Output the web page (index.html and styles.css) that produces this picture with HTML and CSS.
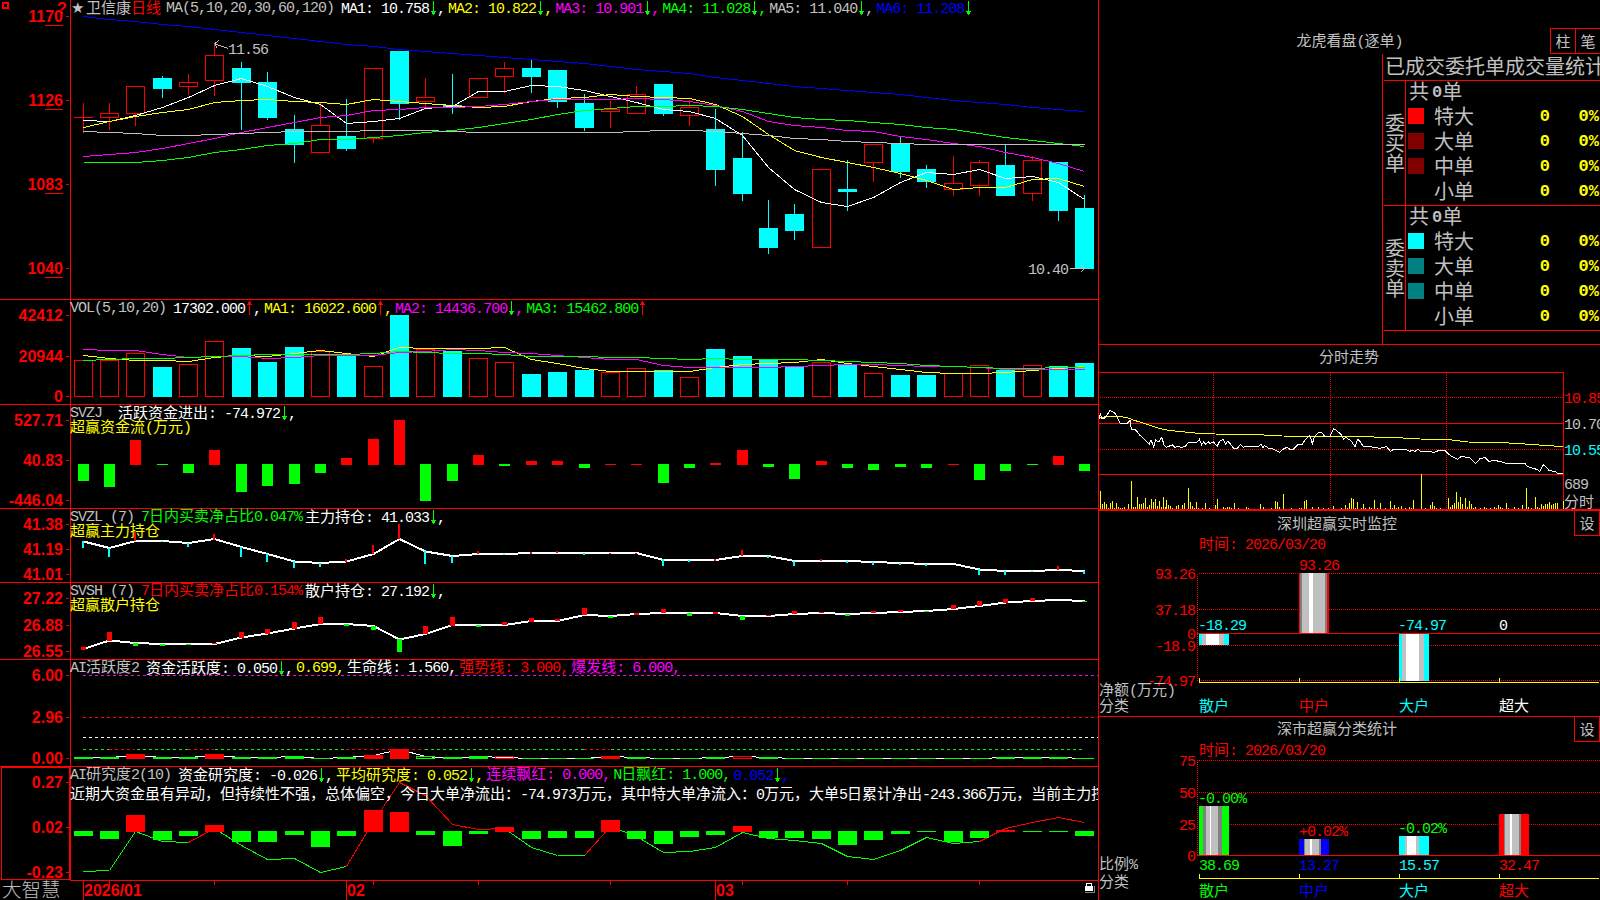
FILE: index.html
```html
<!DOCTYPE html>
<html lang="zh-CN">
<head>
    <meta charset="UTF-8">
    <meta name="viewport" content="width=device-width, initial-scale=1.0">
    <title>大智慧 - 卫信康 日线</title>
    <link rel="stylesheet" href="styles.css">
</head>
<body>
    <!-- arrow shapes reused by the indicator headers -->
    <svg class="defs" width="0" height="0">
        <symbol id="down" viewBox="0 0 8 14"><path d="M4 0h1v14h-1zM2 10h5v1h-5zM3 11h3v2h-3z"/></symbol>
        <symbol id="up" viewBox="0 0 8 14"><path d="M4 0h1v14h-1zM2 3h5v1h-5zM3 1h3v2h-3z"/></symbol>
    </svg>

    <div class="app">
        <div class="charts">
            <section class="panel">
                <svg id="kline" class="plot" viewBox="0 0 1098 299"></svg>
                <header class="head head-main">
                    <span class="star">★</span><span class="zh gray">卫信康</span><span class="zh red">日线</span>
                    <span class="gray params">MA(5,10,20,30,60,120)</span>
                    <span class="white">MA1: 10.758<svg class="arr dn"><use href="#down"/></svg>,</span>
                    <span class="yellow">MA2: 10.822<svg class="arr dn"><use href="#down"/></svg>,</span>
                    <span class="magenta">MA3: 10.901<svg class="arr dn"><use href="#down"/></svg>,</span>
                    <span class="green">MA4: 11.028<svg class="arr dn"><use href="#down"/></svg>,</span>
                    <span class="gray">MA5: 11.040<svg class="arr dn"><use href="#down"/></svg>,</span>
                    <span class="blue">MA6: 11.208<svg class="arr dn"><use href="#down"/></svg></span>
                </header>
            </section>

            <section class="panel">
                <svg id="vol" class="plot" viewBox="0 300 1098 104"></svg>
                <header class="head">
                    <span class="name">VOL(5,10,20)</span>
                    <span class="white">17302.000<svg class="arr up"><use href="#up"/></svg>,</span>
                    <span class="yellow">MA1: 16022.600<svg class="arr up"><use href="#up"/></svg>,</span>
                    <span class="magenta">MA2: 14436.700<svg class="arr dn"><use href="#down"/></svg>,</span>
                    <span class="green">MA3: 15462.800<svg class="arr up"><use href="#up"/></svg></span>
                </header>
            </section>

            <section class="panel">
                <svg id="flow" class="plot" viewBox="0 405 1098 103"></svg>
                <header class="head">
                    <span class="name wide">SVZJ</span>
                    <span class="white"><span class="zh">活跃资金进出</span>: -74.972<svg class="arr dn"><use href="#down"/></svg>,</span>
                    <p class="yellow"><span class="zh">超赢资金流</span>(<span class="zh">万元</span>)</p>
                </header>
            </section>

            <section class="panel">
                <svg id="major" class="plot" viewBox="0 509 1098 73"></svg>
                <header class="head">
                    <span class="name">SVZL (7)</span>
                    <span class="green">7<span class="zh">日内买卖净占比</span>0.047%</span>
                    <span class="white"><span class="zh">主力持仓</span>: 41.033<svg class="arr dn"><use href="#down"/></svg>,</span>
                    <p class="yellow"><span class="zh">超赢主力持仓</span></p>
                </header>
            </section>

            <section class="panel">
                <svg id="retail" class="plot" viewBox="0 583 1098 76"></svg>
                <header class="head">
                    <span class="name">SVSH (7)</span>
                    <span class="red">7<span class="zh">日内买卖净占比</span>0.154%</span>
                    <span class="white"><span class="zh">散户持仓</span>: 27.192<svg class="arr dn"><use href="#down"/></svg>,</span>
                    <p class="yellow"><span class="zh">超赢散户持仓</span></p>
                </header>
            </section>

            <section class="panel">
                <svg id="active" class="plot" viewBox="0 660 1098 106"></svg>
                <header class="head">
                    <span class="name">AI<span class="zh">活跃度</span>2</span>
                    <span class="white"><span class="zh">资金活跃度</span>: 0.050<svg class="arr dn"><use href="#down"/></svg>,</span>
                    <span class="yellow">0.699,</span>
                    <span class="white"><span class="zh">生命线</span>: 1.560,</span>
                    <span class="red"><span class="zh">强势线</span>: 3.000,</span>
                    <span class="magenta"><span class="zh">爆发线</span>: 6.000,</span>
                </header>
            </section>

            <section class="panel last">
                <svg id="study" class="plot" viewBox="0 767 1098 114"></svg>
                <header class="head">
                    <span class="name">AI<span class="zh">研究度</span>2(10)</span>
                    <span class="white"><span class="zh">资金研究度</span>: -0.026<svg class="arr dn"><use href="#down"/></svg>,</span>
                    <span class="yellow"><span class="zh">平均研究度</span>: 0.052<svg class="arr dn"><use href="#down"/></svg>,</span>
                    <span class="magenta"><span class="zh">连续飘红</span>: 0.000,</span>
                    <span class="green">N<span class="zh">日飘红</span>: 1.000,</span>
                    <span class="blue">0.052<svg class="arr dn"><use href="#down"/></svg>,</span>
                    <p class="white advice"><span class="zh">近期大资金虽有异动，但持续性不强，总体偏空，今日大单净流出：</span>-74.973<span class="zh">万元，其中特大单净流入：</span>0<span class="zh">万元，大单</span>5<span class="zh">日累计净出</span>-243.366<span class="zh">万元，当前主力控</span></p>
                </header>
            </section>

            <footer class="timeline">
                <span class="brand">大智慧</span>
                <svg id="dates" class="plot" viewBox="71 881 1027 19"></svg>
            </footer>
        </div>

        <aside class="side">
            <section class="orders">
                <div class="orders-bar">
                    <h2 class="title"><span class="zh">龙虎看盘</span>(<span class="zh">逐单</span>)</h2>
                    <div class="btns"><button>柱</button><button>笔</button></div>
                </div>
                <div class="stats">
                    <h3>已成交委托单成交量统计</h3>
                    <div class="block">
                        <div class="vlabel">委买单</div>
                        <div class="rows">
                            <div class="total">共<b>0</b>单</div>
                            <div class="row"><i class="sq buy1"></i><span>特大</span><b>0</b><b class="pct">0%</b></div>
                            <div class="row"><i class="sq buy2"></i><span>大单</span><b>0</b><b class="pct">0%</b></div>
                            <div class="row"><i class="sq buy2"></i><span>中单</span><b>0</b><b class="pct">0%</b></div>
                            <div class="row"><i class="sq"></i><span>小单</span><b>0</b><b class="pct">0%</b></div>
                        </div>
                    </div>
                    <div class="block">
                        <div class="vlabel">委卖单</div>
                        <div class="rows">
                            <div class="total">共<b>0</b>单</div>
                            <div class="row"><i class="sq sell1"></i><span>特大</span><b>0</b><b class="pct">0%</b></div>
                            <div class="row"><i class="sq sell2"></i><span>大单</span><b>0</b><b class="pct">0%</b></div>
                            <div class="row"><i class="sq sell2"></i><span>中单</span><b>0</b><b class="pct">0%</b></div>
                            <div class="row"><i class="sq"></i><span>小单</span><b>0</b><b class="pct">0%</b></div>
                        </div>
                    </div>
                </div>
            </section>

            <section class="box intraday">
                <svg id="intraday" class="plot" viewBox="1099 345 501 164"></svg>
                <h2 class="title"><span class="zh">分时走势</span></h2>
            </section>

            <section class="box monitor">
                <svg id="monitor" class="plot" viewBox="1099 511 501 205"></svg>
                <h2 class="title"><span class="zh">深圳超赢实时监控</span></h2>
                <button>设</button>
            </section>

            <section class="box classes">
                <svg id="classes" class="plot" viewBox="1099 717 501 183"></svg>
                <h2 class="title"><span class="zh">深市超赢分类统计</span></h2>
                <button>设</button>
            </section>
        </aside>
    </div>

    <script src="script.js"></script>
</body>
</html>
```

FILE: styles.css
```css
* {
    box-sizing: border-box;
}

body {
    margin: 0;
    width: 1600px;
    height: 900px;
    overflow: hidden;
    background: #000;
    color: #c0c0c0;
    font-family: "Liberation Mono", "Noto Sans CJK SC", monospace;
    font-size: 15px;
    line-height: 15px;
    letter-spacing: -1px;
}

h2, h3, p {
    margin: 0;
    font-size: 15px;
    font-weight: normal;
}

.defs {
    position: absolute;
}

/* full-width glyphs are 15px wide, half-width ones 8px */
.zh {
    font-family: "Noto Sans CJK SC", sans-serif;
    letter-spacing: 0;
    line-height: 0;
}

.white { color: #fff; fill: #fff; }
.gray { color: #c0c0c0; fill: #c0c0c0; }
.red { color: #f00; fill: #f00; }
.green { color: #0f0; fill: #0f0; }
.blue { color: #00f; fill: #00f; }
.cyan { color: #0ff; fill: #0ff; }
.yellow { color: #ff0; fill: #ff0; }
.magenta { color: #f0f; fill: #f0f; }

.app {
    display: grid;
    grid-template-columns: 1099px 501px;
    height: 900px;
}

/* ---- left side ---- */
.charts {
    display: grid;
    grid-template-rows: 300px 105px 104px 74px 77px 107px 114px 19px;
    border-right: 1px solid #f00;
    min-width: 0;
}

.panel {
    display: grid;
    grid-template-columns: 1098px;
    border-bottom: 1px solid #f00;
    overflow-x: clip;
}

.panel.last {
    border-bottom: none;
}

.panel > * {
    grid-area: 1 / 1;
}

.plot {
    display: block;
    width: 100%;
    height: 100%;
    shape-rendering: crispEdges;
}

.plot text {
    white-space: pre;
}

.axis-label {
    font-family: "Liberation Sans", sans-serif;
    font-size: 16px;
    font-weight: bold;
    letter-spacing: 0;
    fill: #f00;
}

.head {
    display: flex;
    flex-wrap: wrap;
    align-items: flex-start;
    align-content: flex-start;
    column-gap: 3px;
    padding: 1px 0 0 70px;
    white-space: pre;
}

.head > span {
    height: 15px;
}

.head p {
    flex: 0 0 100%;
    width: 100%;
    height: 15px;
}

.head .name {
    color: #c0c0c0;
    margin-right: 4px;
}

.head .name.wide {
    margin-right: 13px;
}

.head .advice {
    margin-top: 5px;
}

.head-main {
    padding-left: 71px;
}

.head-main .star {
    width: 12px;
    font-family: "DejaVu Sans", sans-serif;
}

.head-main .zh {
    line-height: 15px;
    margin-top: -2px;
    margin-right: -3px;
}

.head-main .params {
    margin-left: 5px;
    margin-right: 4px;
}

.arr {
    width: 8px;
    height: 14px;
    vertical-align: -2px;
    shape-rendering: crispEdges;
}

.dn { fill: #0f0; }
.up { fill: #f00; }

.timeline {
    display: flex;
}

.brand {
    flex: 0 0 71px;
    padding-left: 2px;
    font-family: "Noto Sans CJK SC", sans-serif;
    font-weight: 300;
    font-size: 19.5px;
    line-height: 16px;
    letter-spacing: 0;
}

.timeline .plot {
    flex: 1;
}

/* ---- right side ---- */
.side {
    display: grid;
    grid-template-rows: 345px 166px 206px 183px;
    min-width: 0;
    overflow: hidden;
}

.title {
    text-align: center;
    height: 15px;
}

button {
    width: 26px;
    height: 26px;
    padding: 0;
    background: #000;
    border: 1px solid #f00;
    color: #c0c0c0;
    font: 15px/20px "Noto Sans CJK SC", sans-serif;
}

.orders {
    display: flex;
    flex-direction: column;
    border-bottom: 1px solid #f00;
    overflow: hidden;
}

.orders-bar {
    display: grid;
    grid-template-columns: 1fr;
    height: 54px;
    padding-top: 28px;
}

.orders-bar > * {
    grid-area: 1 / 1;
}

.orders-bar .title {
    padding-top: 7px;
}

.btns {
    display: flex;
    justify-self: end;
}

.btns button {
    border-right: none;
    width: 25px;
}

.stats {
    flex: 1;
    margin-left: 283px;
    padding-left: 1px;
    border-left: 1px solid #f00;
    font-family: "Noto Sans CJK SC", sans-serif;
    font-size: 20px;
    letter-spacing: 0;
}

.stats h3 {
    height: 26px;
    padding-left: 1px;
    font-size: 20px;
    font-weight: normal;
    line-height: 23px;
    white-space: nowrap;
    overflow: hidden;
}

.block {
    display: flex;
    height: 125px;
    border-top: 1px solid #f00;
}

.block:last-child {
    height: 126px;
    border-bottom: 1px solid #f00;
}

.vlabel {
    flex: 0 0 22px;
    width: 22px;
    padding: 32px 0 0 1px;
    border-right: 1px solid #f00;
    line-height: 20px;
    word-break: break-all;
}

.rows {
    flex: 1;
}

.rows b {
    font-family: "Liberation Mono", monospace;
    font-size: 17px;
    font-weight: bold;
    letter-spacing: -1px;
}

.total {
    height: 24px;
    padding-left: 3px;
    line-height: 20px;
}

.total b {
    padding: 0 1px 0 3px;
    vertical-align: 2px;
    line-height: 0;
}

.row {
    display: grid;
    grid-template-columns: 16px 40px 1fr 51px;
    height: 25px;
    padding-left: 2px;
    line-height: 23px;
}

.row span {
    margin-left: 10px;
    line-height: 21px;
    white-space: nowrap;
}

.row b {
    color: #ff0;
    text-align: right;
}

.row .pct {
    letter-spacing: 0;
    padding-right: 1px;
}

.sq {
    width: 16px;
    height: 16px;
    margin-top: 3px;
}

.buy1 { background: #f00; }
.buy2 { background: #800000; }
.sell1 { background: #0ff; }
.sell2 { background: #008080; }

.box {
    display: grid;
    grid-template-columns: 501px;
    overflow: hidden;
}

.box > * {
    grid-area: 1 / 1;
}

.box > .title {
    padding-top: 7px;
    margin-right: 25px;
}

.box > button {
    justify-self: end;
    margin-top: -1px;
}

.intraday {
    border-bottom: 2px solid #f00;
}

.intraday > .title {
    padding-top: 6px;
    margin-right: 1px;
}

.monitor {
    border-bottom: 1px solid #f00;
}

.classes > .title {
    padding-top: 6px;
}
```

FILE: script.js
```javascript
const NS = 'http://www.w3.org/2000/svg';
const C = { r: '#f00', g: '#0f0', c: '#0ff', w: '#fff', y: '#ff0', m: '#f0f', b: '#00f', k: '#c0c0c0', d: '#808080' };

// x position of every trading day
const X = [83, 109, 135, 162, 188, 214, 241, 267, 294, 320, 346, 373, 399, 425, 452, 478, 504, 531, 557, 584,
    610, 636, 663, 689, 715, 742, 768, 794, 821, 847, 873, 900, 926, 953, 979, 1005, 1032, 1058, 1084];

function el(parent, name, attrs) {
    const node = document.createElementNS(NS, name);
    for (const k in attrs) node.setAttribute(k, attrs[k]);
    parent.appendChild(node);
    return node;
}

function get(id) {
    return document.getElementById(id);
}

function rect(svg, x, y, w, h, color) {
    el(svg, 'rect', { x, y, width: w, height: h, fill: color });
}

function hollow(svg, x, y, w, h, color) {
    el(svg, 'rect', { x: x + 0.5, y: y + 0.5, width: w - 1, height: h - 1, fill: 'none', stroke: color });
}

function line(svg, x1, y1, x2, y2, color, dash) {
    const a = { x1, y1, x2, y2, stroke: color };
    if (dash) a['stroke-dasharray'] = dash;
    el(svg, 'line', a);
}

function series(svg, ys, color, width) {
    const pts = ys.map((y, i) => (X[i] + 0.5) + ',' + (y + 0.5)).join(' ');
    el(svg, 'polyline', { points: pts, fill: 'none', stroke: color, 'stroke-width': width || 1 });
}

// mixed text: half-width characters take 8px, full-width ones 15px
function text(svg, x, y, str, cls, end) {
    const runs = str.match(/[\u4e00-\u9fff]+|[^\u4e00-\u9fff]+/g);
    if (end) {
        x -= [...str].reduce((n, ch) => n + (ch > '\u2fff' ? 15 : 8), 0);
    }
    const t = el(svg, 'text', { x, y, class: cls });
    runs.forEach(run => {
        const s = el(t, 'tspan', run[0] > '\u2fff' ? { class: 'zh' } : {});
        s.textContent = run;
    });
}

function axis(svg, top, bottom, ticks) {
    rect(svg, 70, top, 1, bottom - top, C.r);
    ticks.forEach(([y, str]) => {
        rect(svg, 66, y, 3, 1, C.r);
        const t = el(svg, 'text', { x: 63, y: y + 6, 'text-anchor': 'end', class: 'axis-label' });
        t.textContent = str;
    });
}

// ---- daily candles: colour, high, body top, body bottom, low ----
const candles = [
    ['r', 103, 117, 118, 133], ['r', 103, 113, 118, 130], ['r', 86, 86, 114, 126], ['c', 76, 78, 89, 98],
    ['r', 74, 82, 87, 95], ['r', 43, 55, 81, 96], ['c', 62, 68, 83, 130], ['c', 72, 82, 118, 120],
    ['c', 115, 129, 145, 163], ['r', 103, 125, 153, 153], ['c', 99, 136, 149, 151], ['r', 68, 68, 139, 143],
    ['c', 51, 51, 104, 120], ['r', 78, 97, 102, 110], ['c', 74, 105, 108, 114], ['r', 78, 78, 98, 98],
    ['r', 62, 68, 77, 93], ['c', 60, 68, 77, 93], ['c', 70, 70, 102, 108], ['c', 94, 103, 128, 131],
    ['r', 101, 109, 112, 128], ['r', 86, 94, 114, 114], ['c', 84, 84, 114, 116], ['r', 100, 107, 116, 126],
    ['c', 109, 129, 170, 186], ['c', 132, 158, 194, 201], ['c', 200, 228, 248, 254], ['c', 204, 214, 231, 240],
    ['r', 169, 169, 248, 248], ['c', 160, 189, 192, 211], ['r', 144, 144, 163, 182], ['c', 136, 144, 172, 178],
    ['c', 165, 169, 182, 188], ['r', 156, 183, 190, 196], ['r', 160, 162, 186, 196], ['c', 145, 165, 196, 196],
    ['r', 156, 160, 194, 201], ['c', 162, 162, 211, 221], ['c', 195, 208, 269, 269]
];

const k = get('kline');
axis(k, 0, 299, [[16, '1170'], [100, '1126'], [184, '1083'], [268, '1040']]);
[25, 109, 193, 277].forEach(y => rect(k, 45, y, 18, 1, C.r));
candles.forEach(([col, hi, top, bot, lo], i) => {
    const x = X[i];
    if (col === 'c') {
        rect(k, x, hi, 1, lo - hi, C.c);
        rect(k, x - 9, top, 19, bot - top, C.c);
    } else {
        rect(k, x, hi, 1, top - hi, C.r);
        rect(k, x, bot, 1, lo - bot, C.r);
        if (bot - top > 1) hollow(k, x - 9, top, 19, bot - top, C.r);
        else rect(k, x - 9, top, 19, 1, C.r);
    }
});
series(k, [16, 19, 21, 24, 26, 29, 32, 35, 38, 41, 44, 46, 49, 51, 53, 55, 57, 59, 61, 63, 66, 69, 71, 73, 77, 80, 83, 86, 88, 90, 92, 94, 97, 100, 102, 104, 107, 109, 111], C.b);
series(k, [120, 121, 115, 107, 97, 85, 78, 86, 97, 104, 123, 121, 118, 108, 106, 91, 91, 85, 86, 90, 96, 102, 109, 111, 118, 135, 167, 189, 202, 206, 197, 182, 172, 174, 169, 178, 176, 182, 199], C.w);
series(k, [127, 121, 116, 112, 109, 102, 100, 99, 101, 102, 104, 99, 101, 103, 105, 107, 106, 101, 98, 97, 94, 96, 97, 98, 104, 116, 134, 150, 157, 162, 167, 173, 180, 189, 187, 187, 179, 178, 186], C.y);
series(k, [156, 154, 152, 148, 143, 138, 132, 127, 122, 117, 115, 110, 109, 107, 107, 106, 104, 101, 99, 99, 99, 98, 99, 101, 105, 111, 121, 125, 127, 130, 131, 136, 139, 143, 146, 152, 157, 163, 171], C.m);
series(k, [162, 162, 162, 160, 157, 152, 149, 145, 143, 139, 139, 137, 135, 132, 130, 127, 123, 119, 114, 110, 108, 106, 106, 105, 106, 109, 113, 117, 119, 120, 122, 124, 127, 129, 133, 137, 140, 143, 146], C.g);
series(k, [131, 132, 133, 135, 135, 134, 133, 132, 131, 131, 131, 130, 130, 130, 131, 132, 132, 132, 132, 132, 132, 131, 130, 130, 131, 133, 135, 138, 139, 141, 142, 143, 144, 144, 144, 144, 144, 144, 144], C.k);

// high / low markers
text(k, 228, 54, '11.56', 'gray');
el(k, 'path', { d: 'M228 48.5L214 43.5M219 40.5L214.5 43.5L217 47.5', fill: 'none', stroke: C.k });
text(k, 1028, 274, '10.40', 'gray');
el(k, 'path', { d: 'M1070 268.5H1084M1081 265L1084.5 268.5L1081 272', fill: 'none', stroke: C.k });

// window mark and help mark
el(k, 'path', { d: 'M2 2h7v7h-7zM4 4v3h3v-3z', fill: C.r, 'fill-rule': 'evenodd' });
rect(k, 9, 9, 1, 1, C.r);
el(k, 'text', { x: 57, y: 14, class: 'axis-label' }).textContent = '?';

// ---- volume ----
const v = get('vol');
axis(v, 300, 404, [[315, '42412'], [356, '20944'], [396, '0']]);
[360, 360, 353, 367, 364, 341, 348, 362, 347, 351, 355, 366, 315, 349, 351, 358, 362, 374, 372, 370, 372, 368, 370, 377, 349, 356, 360, 367, 362, 365, 373, 375, 375, 373, 365, 370, 365, 366, 363].forEach((y, i) => {
    if (candles[i][0] === 'c') rect(v, X[i] - 9, y, 19, 397 - y, C.c);
    else hollow(v, X[i] - 9, y, 19, 397 - y, C.r);
});
series(v, [355, 358, 360, 360, 361, 357, 355, 356, 353, 350, 353, 356, 347, 348, 348, 348, 347, 359, 363, 368, 371, 371, 371, 371, 367, 364, 363, 362, 359, 363, 366, 369, 372, 373, 373, 372, 370, 368, 366], C.y);
series(v, [349, 350, 350, 354, 357, 356, 356, 358, 357, 355, 355, 355, 352, 351, 349, 350, 352, 353, 355, 357, 359, 359, 365, 367, 367, 367, 367, 366, 365, 364, 364, 365, 366, 366, 367, 369, 369, 369, 369], C.m);
series(v, [360, 359, 358, 358, 357, 356, 355, 354, 354, 354, 354, 353, 351, 352, 353, 353, 354, 356, 356, 356, 357, 357, 358, 359, 358, 359, 359, 359, 360, 361, 362, 363, 365, 366, 367, 368, 368, 367, 367], C.g);

// bars hanging from or standing on a zero line
function zeroBars(svg, ends, zero, half) {
    ends.forEach((y, i) => {
        if (y > zero) rect(svg, X[i] - half, zero, half * 2 + 1, y - zero, C.g);
        else rect(svg, X[i] - half, y, half * 2 + 1, zero + 1 - y, C.r);
    });
}

// ---- money flow ----
const f = get('flow');
axis(f, 405, 508, [[420, '527.71'], [460, '40.83'], [500, '-446.04']]);
zeroBars(f, [481, 487, 440, 465, 473, 450, 492, 486, 484, 473, 458, 439, 420, 501, 481, 455, 466, 461, 461, 468, 464, 464, 483, 468, 463, 450, 467, 479, 461, 468, 470, 467, 468, 464, 480, 471, 465, 456, 471], 464, 5);

// ---- major holders ----
const mj = get('major');
axis(mj, 509, 582, [[524, '41.38'], [549, '41.19'], [574, '41.01']]);
series(mj, [541, 547.5, 540.5, 540.5, 542.5, 538.5, 546.5, 553.5, 561, 562.5, 561, 553.5, 538.5, 551, 555.5, 553.5, 553.5, 552.5, 552.5, 552.5, 552.5, 552.5, 559.5, 559.5, 559.5, 555.5, 555.5, 560.5, 560.5, 560.5, 561.5, 562.5, 563.5, 563.5, 569, 570.5, 570.5, 569.5, 570.5], C.w, 2);
[['c', 541, 548], ['c', 548, 557], ['r', 532, 541], ['c', 541, 542], ['c', 543, 547], ['r', 534, 540], ['c', 547, 557],
 ['c', 554, 562], ['c', 561, 568], ['c', 563, 567], ['r', 559, 562], ['r', 545, 554], ['r', 524, 539], ['c', 551, 564],
 ['c', 556, 563], ['r', 551, 554], ['c', 554, 555], ['r', 552, 554], ['r', 551, 553], ['c', 553, 555], ['r', 553, 554],
 ['r', 553, 554], ['c', 559, 566], ['c', 560, 562], ['r', 559, 561], ['r', 550, 556], ['c', 556, 558], ['c', 561, 566],
 ['r', 559, 561], ['c', 561, 563], ['c', 562, 565], ['c', 563, 565], ['c', 564, 566], ['c', 564, 564], ['c', 569, 575],
 ['c', 571, 575], ['c', 571, 572], ['r', 566, 570], ['c', 571, 574]
].forEach(([col, a, b], i) => rect(mj, X[i] - 1, a, 2, b - a, C[col]));

// ---- retail holders ----
const rt = get('retail');
axis(rt, 583, 659, [[598, '27.22'], [625, '26.88'], [651, '26.55']]);
series(rt, [648.5, 640, 642.5, 643.5, 643.5, 643.5, 637, 633, 628, 623.5, 623.5, 625.5, 639, 633.5, 624.5, 624.5, 624.5, 620.5, 620.5, 614.5, 615.5, 613.5, 612.5, 612.5, 612.5, 615.5, 615.5, 613.5, 612.5, 613.5, 612.5, 611.5, 610.5, 608.5, 605.5, 602, 600.5, 599.5, 600.5], C.w, 2);
[['r', 647, 650], ['r', 632, 641], ['g', 643, 646], ['g', 644, 646], ['g', 644, 645], ['r', 643, 644], ['r', 632, 638],
 ['r', 629, 634], ['r', 622, 629], ['r', 617, 624], ['g', 624, 626], ['g', 626, 630], ['g', 639, 652], ['r', 626, 634],
 ['r', 617, 626], ['g', 625, 627], ['r', 622, 625], ['r', 618, 622], ['r', 619, 621], ['r', 608, 615], ['g', 616, 618],
 ['r', 613, 615], ['r', 609, 613], ['g', 613, 616], ['r', 612, 614], ['g', 616, 620], ['r', 615, 616], ['r', 611, 614],
 ['r', 612, 613], ['g', 614, 616], ['r', 611, 613], ['r', 610, 612], ['g', 611, 612], ['r', 605, 609], ['r', 601, 606],
 ['r', 599, 603], ['r', 598, 601], ['r', 600, 600], ['g', 601, 602]
].forEach(([col, a, b], i) => rect(rt, X[i] - 2, a, 5, b - a, C[col]));

// ---- AI activity ----
const ac = get('active');
axis(ac, 660, 766, [[675, '6.00'], [717, '2.96'], [758, '0.00']]);
[[675, C.m], [717, C.r], [737, C.w]].forEach(([y, col]) => line(ac, 83, y + 0.5, 1098, y + 0.5, col, '3 3'));
line(ac, 83, 749.5, 1082, 749.5, C.g, '3 3');
[[1, 2], [4, 5], [10, 13], [19, 20]].forEach(([a, b]) => {
    rect(ac, X[a], 749, X[b] - X[a], 1, '#000');
    line(ac, X[a], 749.5, X[b], 749.5, C.r, '3 3');
});
series(ac, [757, 757, 755, 757, 757, 755, 757, 757, 756, 758, 757, 755, 749, 756, 758, 756, 757, 758, 758, 758, 756, 757, 758, 758, 757, 756, 757, 758, 758, 758, 758, 758, 758, 758, 758, 757, 757, 757, 758], C.w);
[757, 757, 754, 757, 757, 754, 757, 757, 756, 758, 757, 755, 749, 756, 757, 756, 756, 758, 758, 758, 756, 757, 758, 758, 757, 756, 757, 758, 758, 758, 758, 758, 758, 758, 758, 757, 757, 757, 758].forEach((y, i) => {
    const col = [2, 5, 11, 12, 16, 20, 25].includes(i) ? C.r : C.g;
    if ([13, 16, 25].includes(i)) hollow(ac, X[i] - 9, y, 19, 3, col);
    else rect(ac, X[i] - 9, y, 19, y === 758 ? 1 : 759 - y, col);
});

// ---- AI study ----
const st = get('study');
axis(st, 767, 880, [[782, '0.27'], [827, '0.02'], [872, '-0.23']]);
hollow(st, 1, 767, 69, 113, C.r);
rect(st, 70, 880, 1028, 1, C.r);
const study = [871, 870, 831, 841, 842, 828, 845, 859, 858, 872, 866, 821, 782, 795, 824, 829, 828, 847, 855, 855, 826, 836, 852, 851, 847, 832, 838, 840, 843, 856, 859, 850, 837, 843, 841, 828, 822, 817, 822];
const rising = [5, 11, 12, 13, 14, 15, 16, 20, 35, 36, 37, 38];
for (let i = 1; i < study.length; i++) {
    line(st, X[i - 1] + 0.5, study[i - 1] + 0.5, X[i] + 0.5, study[i] + 0.5, rising.includes(i) ? C.r : C.g);
}
zeroBars(st, [836, 839, 815, 840, 836, 825, 842, 842, 835, 847, 836, 810, 812, 835, 846, 834, 827, 839, 838, 838, 820, 839, 844, 837, 835, 826, 838, 838, 839, 845, 840, 834, 832, 842, 838, 830, 832, 832, 836], 831, 9);

// ---- dates ----
const dt = get('dates');
[[83, '2026/01'], [346, '02'], [715, '03']].forEach(([x, str]) => {
    rect(dt, x, 881, 1, 19, C.r);
    el(dt, 'text', { x: x + 1, y: 896, class: 'axis-label' }).textContent = str;
});
[109, 214, 373, 478, 610, 742, 847, 979].forEach(x => rect(dt, x, 881, 1, 4, C.r));
// lock
rect(dt, 1085, 886, 8, 5, C.w);
rect(dt, 1094, 886, 1, 7, C.d);
rect(dt, 1085, 892, 10, 1, C.d);
el(dt, 'path', { d: 'M1086.5 886V883.5H1091.5V886', fill: 'none', stroke: C.w });

// ---- intraday ----
const tr = get('intraday');
[397, 449].forEach(y => line(tr, 1100, y + 0.5, 1563, y + 0.5, C.r, '1 1'));
[1213, 1330, 1446].forEach(x => line(tr, x + 0.5, 373, x + 0.5, 509, C.r, '1 1'));
rect(tr, 1099, 372, 465, 1, C.r);
rect(tr, 1099, 423, 465, 1, C.r);
rect(tr, 1099, 474, 465, 1, C.r);
rect(tr, 1563, 372, 1, 137, C.r);

// points are kept in thirds of a pixel from (1095, 340)
function path(svg, str, color) {
    const pts = str.split(' ').map(p => p.split(',').map(Number)).map(([x, y]) => (1095 + x / 3) + ',' + (340 + y / 3));
    el(svg, 'polyline', { points: pts.join(' '), fill: 'none', stroke: color });
}
path(tr, '12,232 40,230 60,229 95,232 115,240 150,251 185,263 215,270 250,274 310,280 360,282 490,284 560,288 700,289 800,290 905,293 975,297 1055,298 1120,306 1225,308 1290,312 1404,320', C.y);
path(tr, '12,238 16,220 20,235 28,235 36,226 45,211 55,216 62,222 76,250 96,250 105,241 109,267 122,270 135,286 150,300 163,312 168,300 176,320 182,300 192,306 200,292 208,317 215,322 232,314 240,322 250,318 258,322 270,320 280,307 306,307 313,298 320,314 326,306 332,313 340,306 346,311 355,305 362,314 367,318 374,304 384,298 392,312 398,304 406,312 418,327 426,326 436,314 446,322 455,318 490,320 498,313 504,324 508,316 520,324 533,326 545,332 554,338 560,330 575,322 585,328 596,327 608,314 622,313 630,300 640,290 645,287 652,312 658,290 670,278 680,278 690,290 705,288 710,278 716,267 724,271 738,283 746,298 752,292 768,302 780,320 788,298 795,304 805,319 825,320 855,325 875,320 886,334 896,328 935,329 945,334 952,330 960,334 968,328 980,336 1005,334 1015,338 1030,332 1052,333 1060,342 1072,350 1088,358 1098,350 1122,352 1142,370 1155,356 1170,353 1182,364 1198,361 1212,364 1222,366 1232,370 1290,371 1296,378 1310,384 1325,388 1334,394 1346,373 1362,391 1382,396 1390,401 1404,401', C.w);

const ticks = '16,453 22,492 28,486 34,492 40,504 46,489 52,483 58,504 64,489 70,501 76,504 82,504 88,501 100,492 109,423 115,501 121,501 127,471 133,492 139,492 145,489 151,474 157,501 163,495 169,477 175,486 181,477 187,498 193,483 199,501 205,471 211,501 214,480 220,495 226,498 232,504 244,498 250,495 262,495 268,489 280,444 286,486 292,498 298,504 304,486 310,504 322,504 331,489 343,504 361,495 367,477 385,501 391,504 397,501 403,501 409,504 418,489 430,504 454,501 460,504 496,492 505,501 529,504 541,483 547,486 553,501 565,462 589,504 613,504 619,504 628,483 634,480 652,501 670,501 685,504 700,504 715,498 739,504 751,495 757,504 763,489 769,474 775,477 781,504 787,486 799,504 805,492 811,504 823,501 829,504 838,480 847,504 856,489 871,504 886,483 892,504 898,495 904,504 910,501 919,498 931,504 943,501 949,504 955,480 979,403 991,504 1006,495 1012,486 1018,498 1024,504 1036,504 1060,474 1066,501 1072,495 1078,489 1084,456 1090,486 1096,471 1102,492 1111,474 1117,501 1123,483 1129,492 1135,504 1141,501 1156,504 1168,501 1174,504 1186,504 1198,501 1204,504 1210,495 1216,501 1222,504 1234,489 1240,504 1258,501 1270,504 1282,495 1294,444 1300,501 1309,504 1321,471 1327,501 1333,504 1339,492 1345,498 1351,492 1357,492 1363,486 1369,495 1375,492 1381,489 1387,489 1406,483';
ticks.split(' ').forEach(p => {
    const [x, y] = p.split(',').map(Number);
    const top = 340 + Math.round(y / 3);
    rect(tr, 1095 + Math.floor(x / 3), top, 1, 509 - top, C.y);
});
text(tr, 1564, 403, '10.85', 'red');
text(tr, 1564, 429, '10.70', 'gray');
text(tr, 1564, 455, '10.55', 'cyan');
text(tr, 1564, 489, '689', 'gray');
text(tr, 1564, 507, '分时', 'gray');

// ---- bar with a metal shine: list of [x, colour] stops in thirds of a pixel ----
function shine(svg, x, top, bottom, stops) {
    for (let i = 0; i < stops.length; i++) {
        const a = stops[i][0] / 3;
        const b = (i + 1 < stops.length ? stops[i + 1][0] : 90) / 3;
        rect(svg, x + a, top, b - a, bottom - top, C[stops[i][1]]);
    }
}

function categories(svg, y, baseline, cls) {
    rect(svg, 1199, y, 400, 1, C.y);
    ['散户', '中户', '大户', '超大'].forEach((name, i) => {
        rect(svg, 1199 + i * 100, y - 4, 1, 4, C.y);
        text(svg, 1199 + i * 100, baseline, name, cls[i]);
    });
}

// ---- realtime monitor ----
const mo = get('monitor');
text(mo, 1199, 549, '时间: 2026/03/20', 'red');
[573, 609, 645, 680].forEach(y => line(mo, 1199, y + 0.5, 1600, y + 0.5, C.r, '1 1'));
line(mo, 1197.5, 574, 1197.5, 681, C.r, '1 1');
[[579, '93.26'], [615, '37.18'], [639, '0'], [651, '-18.9'], [686, '-74.97']].forEach(([y, s]) => text(mo, 1195, y, s, 'red', true));
shine(mo, 1199, 634, 645, [[0, 'c'], [9, 'k'], [21, 'w'], [60, 'k'], [75, 'c']]);
shine(mo, 1299, 573, 633, [[0, 'r'], [3, 'd'], [9, 'k'], [30, 'w'], [42, 'k'], [78, 'd'], [84, 'r']]);
rect(mo, 1197, 633, 403, 1, C.r);
shine(mo, 1399, 634, 681, [[0, 'c'], [9, 'k'], [21, 'w'], [60, 'k'], [75, 'c']]);
categories(mo, 682, 711, ['cyan', 'red', 'cyan', 'white']);
text(mo, 1198, 630, '-18.29', 'cyan');
text(mo, 1299, 570, '93.26', 'red');
text(mo, 1398, 630, '-74.97', 'cyan');
text(mo, 1499, 630, '0', 'white');
text(mo, 1099, 695, '净额(万元)', 'gray');
text(mo, 1099, 711, '分类', 'gray');

// ---- class statistics ----
const cl = get('classes');
text(cl, 1199, 755, '时间: 2026/03/20', 'red');
[760, 792, 824].forEach(y => line(cl, 1197, y + 0.5, 1600, y + 0.5, C.r, '1 1'));
line(cl, 1197.5, 760, 1197.5, 855, C.r, '1 1');
[[766, '75'], [798, '50'], [830, '25'], [861, '0']].forEach(([y, s]) => text(cl, 1195, y, s, 'red', true));
shine(cl, 1199, 806, 855, [[0, 'g'], [12, 'd'], [21, 'k'], [33, 'w'], [36, 'k'], [57, 'd'], [69, 'g']]);
shine(cl, 1299, 839, 855, [[0, 'b'], [15, 'd'], [18, 'k'], [33, 'w'], [39, 'k'], [60, 'd'], [66, 'b']]);
shine(cl, 1399, 836, 855, [[0, 'c'], [18, 'k'], [24, 'w'], [51, 'k'], [60, 'c']]);
shine(cl, 1499, 814, 855, [[0, 'r'], [15, 'd'], [18, 'k'], [33, 'w'], [39, 'k'], [60, 'd'], [66, 'r']]);
rect(cl, 1197, 855, 403, 1, C.r);
text(cl, 1198, 803, '-0.00%', 'green');
text(cl, 1299, 836, '+0.02%', 'red');
text(cl, 1398, 833, '-0.02%', 'green');
[['38.69', 'green'], ['13.27', 'blue'], ['15.57', 'cyan'], ['32.47', 'red']].forEach(([s, c], i) => text(cl, 1199 + i * 100, 870, s, c));
categories(cl, 878, 896, ['green', 'blue', 'cyan', 'red']);
text(cl, 1099, 869, '比例%', 'gray');
text(cl, 1099, 887, '分类', 'gray');
```
